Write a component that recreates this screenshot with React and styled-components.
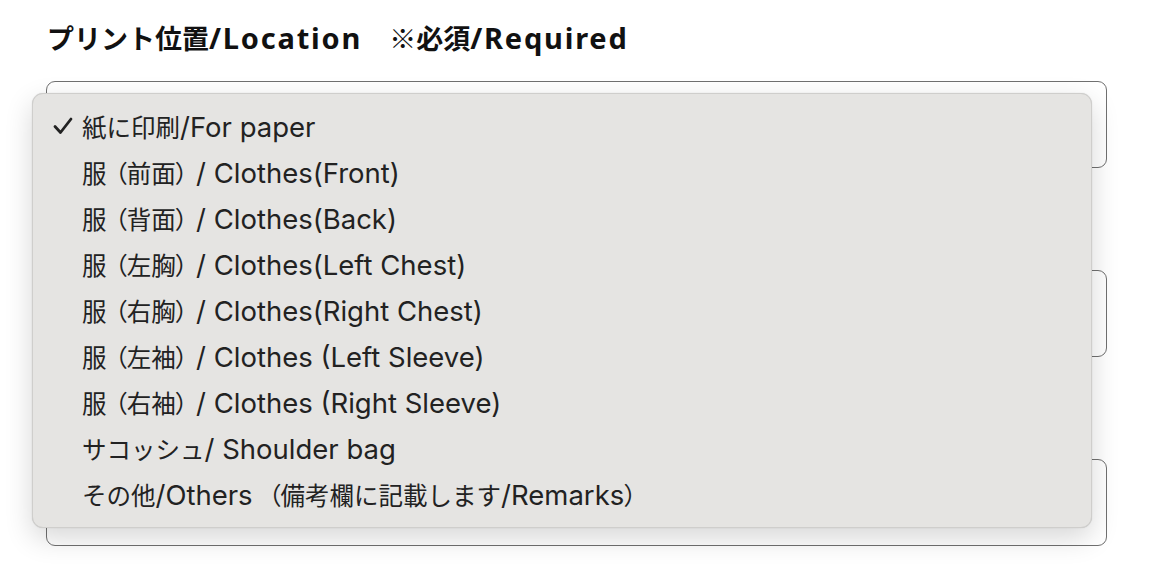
import React from "react";
import styled, { createGlobalStyle } from "styled-components";

const Global = createGlobalStyle`
  html, body { margin: 0; padding: 0; background: #ffffff; }
  body { font-family: Inter, "Noto Sans CJK JP", sans-serif; }
`;

const Page = styled.div`
  position: relative;
  width: 1170px;
  height: 576px;
  overflow: hidden;
  background: #fff;
  padding: 19px 63px 0 46px;
  box-sizing: border-box;
`;

const Title = styled.h2`
  margin: 0 0 0 1px;
  font-family: "Noto Sans", "Noto Sans CJK JP", sans-serif;
  font-weight: 700;
  font-size: 29px;
  line-height: 38px;
  color: #111;
  letter-spacing: 1.8px;
  white-space: pre;
`;

const TitleCjk = styled.span`
  font-family: "Noto Sans CJK JP", sans-serif;
  font-size: 27px;
  letter-spacing: 0;
`;

const Fields = styled.div`
  display: flex;
  flex-direction: column;
  gap: 102px;
  margin-top: 24px;
`;

const Field = styled.div`
  height: 85px;
  border: 1px solid #707070;
  border-radius: 9px;
  background: #fff;
`;

const Menu = styled.ul`
  position: absolute;
  left: 32px;
  top: 93px;
  width: 1060px;
  height: 435px;
  box-sizing: border-box;
  margin: 0;
  padding: 9px 0 0;
  list-style: none;
  background: #e5e4e2;
  border: 1px solid #cfcecc;
  border-radius: 11px;
  box-shadow: 0 10px 28px rgba(0, 0, 0, 0.16), 0 0 1px rgba(0, 0, 0, 0.2);
`;

const Item = styled.li`
  display: flex;
  align-items: center;
  height: 46px;
  padding-left: 20px;
  font-family: Inter, "Noto Sans CJK JP", sans-serif;
  font-size: 27.5px;
  color: #222;
  white-space: pre;
`;

const ItemCjk = styled.span`
  font-family: "Noto Sans CJK JP", sans-serif;
  font-size: 24.5px;
`;

const Paren = styled.span`
  font-feature-settings: "palt" 1;
  padding-left: ${(p) => (p.$open ? "8px" : "0")};
  padding-right: ${(p) => (p.$open ? "0" : "8px")};
`;

const CheckSlot = styled.span`
  display: inline-flex;
  align-items: center;
  width: 29px;
  height: 24px;
`;

const Check = () => (
  <svg width="20" height="18" viewBox="0 0 20 18">
    <path d="M2 9.5 L7.5 15.5 L18 2" fill="none" stroke="#222" strokeWidth="2.8" strokeLinecap="round" strokeLinejoin="round" />
  </svg>
);

const CJK_RE = /([\u3000-\u30ff\u3400-\u9fff\uff00-\uffef\u203b]+)/;
const PAREN_RE = /([（）])/;

const CjkRun = ({ text, Cjk }) => (
  <Cjk>
    {text.split(PAREN_RE).filter(Boolean).map((p, i) =>
      PAREN_RE.test(p) ? (
        <Paren key={i} $open={p === "（"}>{p}</Paren>
      ) : (
        <React.Fragment key={i}>{p}</React.Fragment>
      )
    )}
  </Cjk>
);

const Runs = ({ text, Cjk }) =>
  text.split(CJK_RE).filter(Boolean).map((part, i) =>
    CJK_RE.test(part) ? (
      <CjkRun key={i} text={part} Cjk={Cjk} />
    ) : (
      <React.Fragment key={i}>{part}</React.Fragment>
    )
  );

const options = [
  "紙に印刷/For paper",
  "服（前面）/ Clothes(Front)",
  "服（背面）/ Clothes(Back)",
  "服（左胸）/ Clothes(Left Chest)",
  "服（右胸）/ Clothes(Right Chest)",
  "服（左袖）/ Clothes (Left Sleeve)",
  "服（右袖）/ Clothes (Right Sleeve)",
  "サコッシュ/ Shoulder bag",
  "その他/Others （備考欄に記載します/Remarks）",
];

export default function App() {
  return (
    <>
      <Global />
      <Page>
        <Title>
          <Runs text={"プリント位置/Location　※必須/Required"} Cjk={TitleCjk} />
        </Title>
        <Fields>
          <Field />
          <Field />
          <Field />
        </Fields>
        <Menu>
          {options.map((o, i) => (
            <Item key={o}>
              <CheckSlot>{i === 0 && <Check />}</CheckSlot>
              <span>
                <Runs text={o} Cjk={ItemCjk} />
              </span>
            </Item>
          ))}
        </Menu>
      </Page>
    </>
  );
}
